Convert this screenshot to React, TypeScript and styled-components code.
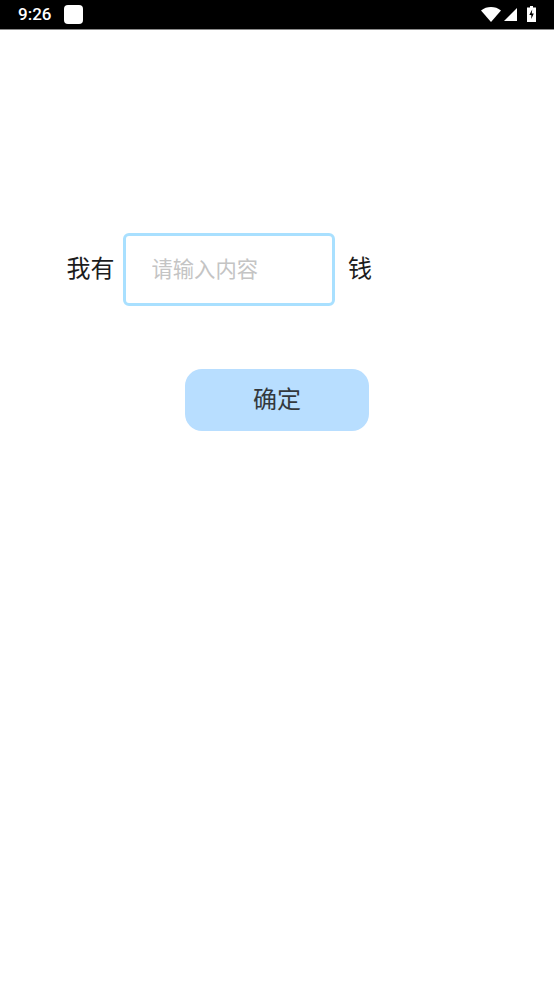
import * as React from 'react';
import styled, { createGlobalStyle } from 'styled-components';

const GlobalStyle = createGlobalStyle`
  html, body {
    margin: 0;
    padding: 0;
    background: #fff;
  }
  * {
    box-sizing: border-box;
  }
`;
const Page = styled.div`
  width: 554px;
  height: 984px;
  overflow: hidden;
  background: #fff;
  font-family: 'Noto Sans CJK SC', sans-serif;
`;
const StatusBar = styled.div`
  height: 30px;
  background: #000;
  border-bottom: 1px solid #8a8a8a;
  display: flex;
  align-items: center;
  padding: 0 18px 1px 18px;
  color: #fff;
`;
const Time = styled.span`
  font-family: Roboto, sans-serif;
  font-size: 17px;
  font-weight: 500;
  width: 46px;
`;
const AppDot = styled.span`
  width: 19px;
  height: 19px;
  border-radius: 4px;
  background: #fff;
`;
const StatusIcons = styled.div`
  margin-left: auto;
  display: flex;
  align-items: center;
`;
const Wifi = styled.svg`
  margin-right: 3px;
`;
const Signal = styled.svg`
  margin-right: 10px;
`;
const Form = styled.div`
  display: flex;
  align-items: center;
  margin-top: 203px;
  padding-left: 66.5px;
`;
const Label = styled.span`
  font-size: 24px;
  line-height: 34px;
  padding-bottom: 6px;
  color: #1c1c1c;
`;
const Field = styled.input`
  width: 212px;
  height: 73px;
  margin: 0 13px 0 8.5px;
  padding: 0 0 5px 25.5px;
  border: 3px solid #a9e0ff;
  border-radius: 6px;
  background: #fff;
  outline: none;
  font-family: inherit;
  font-size: 21.3px;

  &::placeholder {
    color: #c4c4c4;
    opacity: 1;
  }
`;
const Submit = styled.button`
  display: block;
  width: 184px;
  height: 62px;
  margin: 63px 0 0 185px;
  padding: 0 0 6px;
  border: none;
  border-radius: 17px;
  background: #b8deff;
  color: #33383d;
  font-family: inherit;
  font-size: 24px;
`;

export default function App() {
  return (
    <Page>
      <GlobalStyle />
      <StatusBar>
        <Time>9:26</Time>
        <AppDot />
        <StatusIcons>
          <Wifi width="20" height="15" viewBox="0 0 20 15">
            <path d="M0 3.5C3 1 6.300 0 10 0s7 1 10 3.500L10 15z" fill="#fff" />
          </Wifi>
          <Signal width="13" height="13" viewBox="0 0 13 13">
            <path d="M13 0v13H0z" fill="#fff" />
          </Signal>
          <svg width="9" height="16" viewBox="0 0 9 16">
            <path d="M3 0h3v1.500h3V16H0V1.500h3z" fill="#fff" />
            <path d="M5.200 3.500 2.300 9h2v4l2.500-5.500h-2z" fill="#000" />
          </svg>
        </StatusIcons>
      </StatusBar>
      <Form>
        <Label>我有</Label>
        <Field placeholder="请输入内容" />
        <Label>钱</Label>
      </Form>
      <Submit>确定</Submit>
    </Page>
  );
}
